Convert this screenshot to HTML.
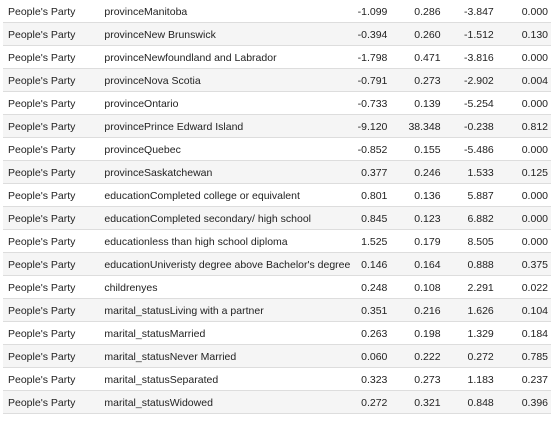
<!DOCTYPE html>
<html><head><style>
body{margin:0;background:#fff;font-family:"Liberation Sans",sans-serif;font-size:10.5px;color:#222;}
table{position:absolute;left:3px;top:0;width:548px;border-collapse:collapse;}
td{height:20px;padding:2px 0 0 0;border-bottom:1px solid #ddd;white-space:nowrap;}
tr:nth-child(even) td{background:#f5f5f5;}
td.a{padding-left:5px;width:96px;}
td.n{text-align:right;padding-right:3px;}
</style></head><body>
<table>
<colgroup><col style="width:101px"><col style="width:248px"><col style="width:37px"><col style="width:53px"><col style="width:53px"><col style="width:54px"></colgroup>
<tr><td class="a">People's Party</td><td>provinceManitoba</td><td class="n">-1.099</td><td class="n">0.286</td><td class="n">-3.847</td><td class="n">0.000</td></tr>
<tr><td class="a">People's Party</td><td>provinceNew Brunswick</td><td class="n">-0.394</td><td class="n">0.260</td><td class="n">-1.512</td><td class="n">0.130</td></tr>
<tr><td class="a">People's Party</td><td>provinceNewfoundland and Labrador</td><td class="n">-1.798</td><td class="n">0.471</td><td class="n">-3.816</td><td class="n">0.000</td></tr>
<tr><td class="a">People's Party</td><td>provinceNova Scotia</td><td class="n">-0.791</td><td class="n">0.273</td><td class="n">-2.902</td><td class="n">0.004</td></tr>
<tr><td class="a">People's Party</td><td>provinceOntario</td><td class="n">-0.733</td><td class="n">0.139</td><td class="n">-5.254</td><td class="n">0.000</td></tr>
<tr><td class="a">People's Party</td><td>provincePrince Edward Island</td><td class="n">-9.120</td><td class="n">38.348</td><td class="n">-0.238</td><td class="n">0.812</td></tr>
<tr><td class="a">People's Party</td><td>provinceQuebec</td><td class="n">-0.852</td><td class="n">0.155</td><td class="n">-5.486</td><td class="n">0.000</td></tr>
<tr><td class="a">People's Party</td><td>provinceSaskatchewan</td><td class="n">0.377</td><td class="n">0.246</td><td class="n">1.533</td><td class="n">0.125</td></tr>
<tr><td class="a">People's Party</td><td>educationCompleted college or equivalent</td><td class="n">0.801</td><td class="n">0.136</td><td class="n">5.887</td><td class="n">0.000</td></tr>
<tr><td class="a">People's Party</td><td>educationCompleted secondary/ high school</td><td class="n">0.845</td><td class="n">0.123</td><td class="n">6.882</td><td class="n">0.000</td></tr>
<tr><td class="a">People's Party</td><td>educationless than high school diploma</td><td class="n">1.525</td><td class="n">0.179</td><td class="n">8.505</td><td class="n">0.000</td></tr>
<tr><td class="a">People's Party</td><td>educationUniveristy degree above Bachelor's degree</td><td class="n">0.146</td><td class="n">0.164</td><td class="n">0.888</td><td class="n">0.375</td></tr>
<tr><td class="a">People's Party</td><td>childrenyes</td><td class="n">0.248</td><td class="n">0.108</td><td class="n">2.291</td><td class="n">0.022</td></tr>
<tr><td class="a">People's Party</td><td>marital_statusLiving with a partner</td><td class="n">0.351</td><td class="n">0.216</td><td class="n">1.626</td><td class="n">0.104</td></tr>
<tr><td class="a">People's Party</td><td>marital_statusMarried</td><td class="n">0.263</td><td class="n">0.198</td><td class="n">1.329</td><td class="n">0.184</td></tr>
<tr><td class="a">People's Party</td><td>marital_statusNever Married</td><td class="n">0.060</td><td class="n">0.222</td><td class="n">0.272</td><td class="n">0.785</td></tr>
<tr><td class="a">People's Party</td><td>marital_statusSeparated</td><td class="n">0.323</td><td class="n">0.273</td><td class="n">1.183</td><td class="n">0.237</td></tr>
<tr><td class="a">People's Party</td><td>marital_statusWidowed</td><td class="n">0.272</td><td class="n">0.321</td><td class="n">0.848</td><td class="n">0.396</td></tr>
</table>
</body></html>
